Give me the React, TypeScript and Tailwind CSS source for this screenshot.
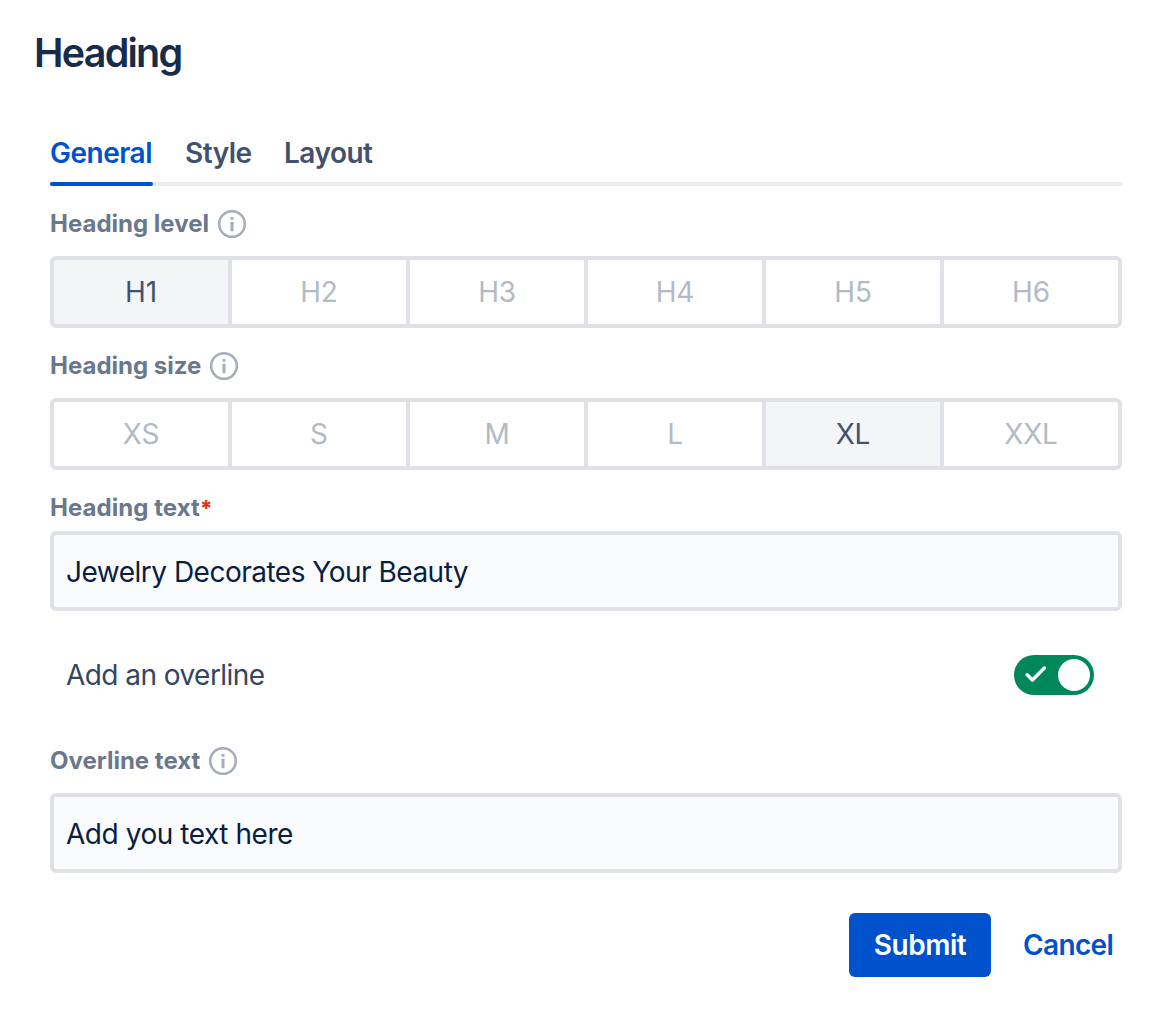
function InfoIcon() {
  return (
    <svg width="28" height="28" viewBox="-14 -14 28 28" fill="none" className="shrink-0 text-[#a5adba]">
      <circle r="12.8" stroke="currentColor" strokeWidth="2.5" />
      <rect x="-1.5" y="-7" width="3" height="2.8" rx="0.4" fill="currentColor" />
      <rect x="-1.5" y="-2.2" width="3" height="9.4" rx="0.4" fill="currentColor" />
    </svg>
  );
}

function Segmented({ options, active }: { options: string[]; active: string }) {
  return (
    <div className="grid h-[72px] grid-cols-6 gap-1 rounded-[6px] border-4 border-[#dfe1e6] bg-[#dfe1e6]">
      {options.map((o) => (
        <button
          key={o}
          className={
            'flex items-center justify-center text-[28px] leading-8 tracking-[-0.2px] first:rounded-l-[2px] last:rounded-r-[2px] ' +
            (o === active ? 'bg-[#f4f5f7] text-[#42526e]' : 'bg-white text-[#b3bac5]')
          }
        >
          {o}
        </button>
      ))}
    </div>
  );
}

export default function App() {
  return (
    <main className="h-[1022px] w-[1170px] bg-white pr-12 font-['Inter',sans-serif]">
      <h1 className="h-[118px] pt-[29px] pl-[34px] text-[39.5px] leading-[48px] font-semibold tracking-[-1.75px] text-[#172b4d]">
        Heading
      </h1>
      <div className="ml-[50px]">
        <nav className="flex h-[68px] gap-8 border-b-4 border-[#ebecf0] text-[28px] leading-[34px] font-semibold text-[#42526e]">
          <a className="-mb-1 flex h-[68px] w-[103px] flex-col justify-between pt-[18px] tracking-[-0.5px] text-[#0052cc]">
            General
            <span className="h-1 rounded-[2px] bg-[#0052cc]" />
          </a>
          <a className="w-[67px] pt-[18px] tracking-[-0.5px]">Style</a>
          <a className="pt-[18px] tracking-[-0.5px]">Layout</a>
        </nav>

        <div className="flex h-[70px] items-start pt-6 text-2xl leading-7 font-bold text-[#6b778c]">
          <span className="w-[168px]">Heading level</span>
          <InfoIcon />
        </div>
        <Segmented options={['H1', 'H2', 'H3', 'H4', 'H5', 'H6']} active="H1" />

        <div className="flex h-[70px] items-start pt-6 text-2xl leading-7 font-bold text-[#6b778c]">
          <span className="w-[160.3px]">Heading size</span>
          <InfoIcon />
        </div>
        <Segmented options={['XS', 'S', 'M', 'L', 'XL', 'XXL']} active="XL" />

        <div className="flex h-[61px] items-start pt-6 text-2xl leading-7 font-bold text-[#6b778c]">
          <span className="tracking-[0.05px]">Heading text</span>
          <span className="text-[22px] font-extrabold text-[#de350b]">*</span>
        </div>
        <div className="flex h-20 items-center rounded-[6px] border-4 border-[#dfe1e6] bg-[#fafbfc] pt-0.5 pl-3 text-[28px] leading-9 tracking-[-0.5px] text-[#091e42]">
          Jewelry Decorates Your Beauty
        </div>

        <div className="mt-11 flex h-10 items-center justify-between pr-7 pl-4 text-[28px] leading-9 tracking-[-0.55px] text-[#344563]">
          Add an overline
          <button className="flex h-10 w-20 items-center justify-between rounded-full bg-[#00875a] pr-1 pl-[11px]">
            <svg width="22" height="18" viewBox="1025 666 22 18" fill="none">
              <path d="M1027.2 674.8l5.2 5.2 12-12" stroke="white" strokeWidth="3.4" strokeLinecap="round" strokeLinejoin="round" />
            </svg>
            <span className="size-8 rounded-full bg-white" />
          </button>
        </div>

        <div className="mt-7 flex h-[70px] items-start pt-6 text-2xl leading-7 font-bold text-[#6b778c]">
          <span className="w-[159px]">Overline text</span>
          <InfoIcon />
        </div>
        <div className="flex h-20 items-center rounded-[6px] border-4 border-[#dfe1e6] bg-[#fafbfc] pt-0.5 pl-3 text-[28px] leading-9 tracking-[-0.45px] text-[#091e42]">
          Add you text here
        </div>

        <div className="mt-10 flex h-16 items-center justify-end gap-8 pr-2 text-[28px] leading-8 font-semibold">
          <button className="h-16 w-[142px] rounded-[6px] bg-[#0052cc] tracking-[-0.5px] text-white">Submit</button>
          <button className="w-[91px] text-left tracking-[-0.65px] text-[#0052cc]">Cancel</button>
        </div>
      </div>
    </main>
  );
}
